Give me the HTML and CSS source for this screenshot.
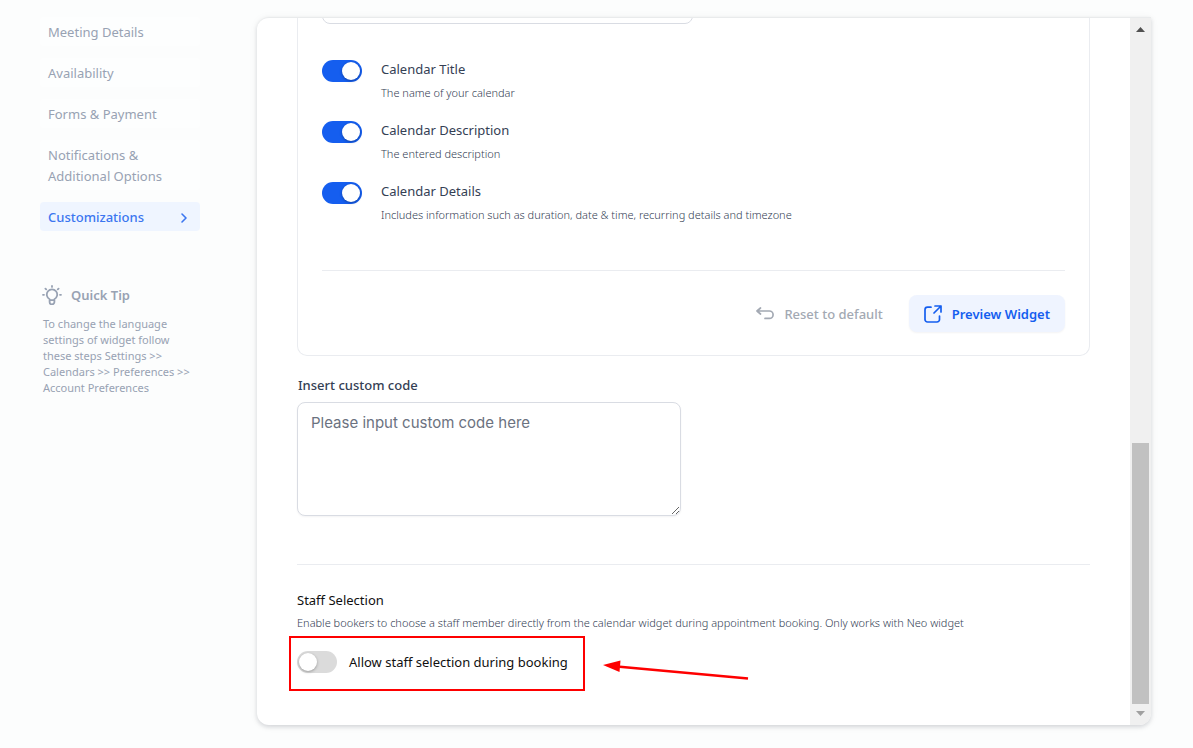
FILE: index.html
```html
<!DOCTYPE html>
<html lang="en">
<head>
<meta charset="utf-8">
<meta name="viewport" content="width=device-width, initial-scale=1">
<title>Calendar customizations</title>
<link rel="stylesheet" href="styles.css">
</head>
<body>
<div class="page">
  <aside class="sidebar">
    <nav class="nav">
      <a class="nav-link" href="#meeting">Meeting Details</a>
      <a class="nav-link" href="#availability">Availability</a>
      <a class="nav-link" href="#forms">Forms &amp; Payment</a>
      <a class="nav-link" href="#notifications">Notifications &amp;<br>Additional Options</a>
      <a class="nav-link nav-link-active" href="#customizations" aria-current="page">Customizations
        <svg width="8" height="12" viewBox="0 0 8 12" fill="none" stroke="currentColor" stroke-width="1.6" stroke-linecap="round" stroke-linejoin="round" aria-hidden="true"><path d="M2 2l4 4-4 4"/></svg>
      </a>
    </nav>
    <section class="tip">
      <h2 class="tip-title">
        <svg width="20" height="20" viewBox="0 0 20 20" fill="none" stroke="currentColor" stroke-width="1.8" stroke-linecap="round" stroke-linejoin="round" aria-hidden="true"><path d="M7.600 15.200v-1A5.200 5.200 0 1 1 12.400 14.200v1M7.600 15.200h4.800v1.800a2.400 2.400 0 0 1-4.800 0zM10 .9v1M1 9.800h1M18 9.800h1M3.400 3.600l.8.8M16.600 3.600l-.8.8"/></svg>
        Quick Tip
      </h2>
      <p class="tip-text">To change the language<br>settings of widget follow<br>these steps Settings &gt;&gt;<br>Calendars &gt;&gt; Preferences &gt;&gt;<br>Account Preferences</p>
    </section>
  </aside>

  <main class="panel">
    <div class="content">
      <section class="card">
        <div class="field-clip"><input class="field" type="text" aria-label="Widget text"></div>
        <div class="options">
          <div class="option">
            <input class="switch" type="checkbox" role="switch" id="title" checked>
            <div class="option-text">
              <label class="option-name" for="title">Calendar Title</label>
              <p class="note">The name of your calendar</p>
            </div>
          </div>
          <div class="option">
            <input class="switch" type="checkbox" role="switch" id="description" checked>
            <div class="option-text">
              <label class="option-name" for="description">Calendar Description</label>
              <p class="note">The entered description</p>
            </div>
          </div>
          <div class="option">
            <input class="switch" type="checkbox" role="switch" id="details" checked>
            <div class="option-text">
              <label class="option-name" for="details">Calendar Details</label>
              <p class="note">Includes information such as duration, date &amp; time, recurring details and timezone</p>
            </div>
          </div>
        </div>
        <div class="actions">
          <button class="button button-plain" type="button">
            <svg width="18" height="14" viewBox="0 0 18 14" fill="none" stroke="currentColor" stroke-width="1.7" stroke-linecap="round" stroke-linejoin="round" aria-hidden="true"><path d="M4.500 1L1 4l3.500 3M1.200 4h12.200a3.700 3.700 0 0 1 0 7.400H9"/></svg>
            Reset to default
          </button>
          <button class="button button-soft" type="button">
            <svg width="18" height="18" viewBox="0 0 18 18" fill="none" stroke="currentColor" stroke-width="1.700" stroke-linecap="round" stroke-linejoin="round" aria-hidden="true"><path d="M7 2.200H3.500A2.500 2.500 0 0 0 1 4.700V14.500a2.500 2.500 0 0 0 2.500 2.500h9.500a2.500 2.500 0 0 0 2.500-2.500V11M11 1h6v6M17 1l-7 7"/></svg>
            Preview Widget
          </button>
        </div>
      </section>

      <section class="code">
        <label class="code-label" for="code">Insert custom code</label>
        <textarea class="code-input" id="code" placeholder="Please input custom code here"></textarea>
      </section>

      <section class="staff">
        <h2 class="staff-title">Staff Selection</h2>
        <p class="note">Enable bookers to choose a staff member directly from the calendar widget during appointment booking. Only works with Neo widget</p>
        <div class="staff-row">
          <input class="switch" type="checkbox" role="switch" id="staff">
          <label class="staff-label" for="staff">Allow staff selection during booking</label>
          <svg class="arrow" width="148" height="22" viewBox="0 0 148 22" aria-hidden="true"><path d="M14 6.500L145 18.500" stroke="#fe0000" stroke-width="2.600"/><path d="M0 5L17.500.500l-1 11.500z" fill="#fe0000"/></svg>
        </div>
      </section>
    </div>
    <div class="scrollbar" aria-hidden="true">
      <svg width="9" height="5" viewBox="0 0 9 5"><path d="M4.500 0L9 5H0z" fill="#505050"/></svg>
      <div class="scroll-track"><div class="scroll-thumb"></div></div>
      <svg width="9" height="5" viewBox="0 0 9 5"><path d="M0 0h9L4.500 5z" fill="#a0a0a0"/></svg>
    </div>
  </main>
</div>
</body>
</html>
```
FILE: styles.css
```css
* { box-sizing: border-box; }

body {
  margin: 0;
  background: #fcfdfd;
  color: #344054;
  font: 13px/20px "Noto Sans", "Open Sans", sans-serif;
}

h2, p { margin: 0; }

.page {
  display: flex;
  align-items: stretch;
  gap: 57px;
  padding: 17px 42px 22px 40px;
}

.sidebar { flex: 0 0 160px; }

.nav {
  display: flex;
  flex-direction: column;
  gap: 12px;
}

.nav-link {
  display: flex;
  align-items: center;
  justify-content: space-between;
  padding: 5px 12px 3px 8px;
  border-radius: 4px;
  background: #fdfefe;
  color: #98a2b3;
  font-weight: 400;
  line-height: 21px;
  text-decoration: none;
}

.nav-link-active {
  background: #eff5ff;
  color: #3b76f0;
  font-weight: 500;
}

.tip {
  margin-top: 54px;
  padding-left: 3px;
  color: #98a2b3;
}

.tip-title {
  display: flex;
  align-items: center;
  gap: 9px;
  margin-left: -1px;
  font-size: 13px;
  font-weight: 600;
}

.tip-text {
  margin-top: 11px;
  font-size: 11px;
  line-height: 16px;
  white-space: nowrap;
}

.panel {
  display: flex;
  flex: 1;
  min-width: 0;
  overflow: hidden;
  border-top: 1px solid #e9ebec;
  border-radius: 12px 0 12px 12px;
  background: #fff;
  box-shadow: 0 2px 4px rgba(16, 24, 40, .14), 0 1px 10px rgba(16, 24, 40, .05);
}

.content {
  flex: 1;
  min-width: 0;
  padding: 0 40px 34px;
}

.card {
  padding: 0 24px 23px;
  border: 1px solid #eaecf0;
  border-top: 0;
  border-radius: 0 0 10px 10px;
}

.field-clip {
  display: flex;
  align-items: flex-end;
  height: 6px;
  overflow: hidden;
}

.field {
  flex: none;
  width: 371px;
  max-width: 100%;
  height: 36px;
  border: 1px solid #d9dce3;
  border-radius: 8px;
  background: #fff;
}

.options {
  display: flex;
  flex-direction: column;
  gap: 17px;
  padding: 35px 0 45px;
  border-bottom: 1px solid #eaecf0;
}

.option {
  display: flex;
  gap: 19px;
}

.option-text {
  display: flex;
  flex-direction: column;
  gap: 4px;
}

.option .switch { margin-top: 1px; }

.note {
  color: #344054;
  font-size: 11px;
  font-weight: 300;
}

.switch {
  flex: none;
  appearance: none;
  width: 40px;
  height: 22px;
  margin: 0;
  padding: 2px;
  border-radius: 11px;
  background: #dbdbdb;
}

.switch::before {
  display: block;
  width: 18px;
  height: 18px;
  border-radius: 50%;
  background: #fff;
  box-shadow: 0 1px 3px rgba(0, 0, 0, .3);
  content: "";
}

.switch:checked { background: #155eef; }
.switch:checked::before { margin-left: auto; }

.actions {
  display: flex;
  justify-content: flex-end;
  gap: 24px;
  padding-top: 24px;
}

.button {
  display: flex;
  align-items: center;
  gap: 10px;
  height: 37px;
  border: 0;
  border-radius: 8px;
  background: transparent;
  font: inherit;
}

.button-plain {
  padding: 0 2px 0 0;
  color: #a3a9b3;
  font-weight: 500;
}

.button-soft {
  padding: 0 15px;
  background: #eff4ff;
  box-shadow: 0 1px 2px rgba(16, 24, 40, .05);
  color: #155eef;
  font-weight: 600;
}

.code {
  display: flex;
  flex-direction: column;
  gap: 7px;
  padding: 19px 0 48px;
  border-bottom: 1px solid #eaecf0;
}

.code-label {
  padding-left: 1px;
  font-weight: 500;
}

.code-input {
  width: 384px;
  max-width: 100%;
  height: 114px;
  padding: 8px 13px;
  border: 1px solid #d9dce3;
  border-radius: 8px;
  background: #fff;
  box-shadow: 0 1px 2px rgba(16, 24, 40, .05);
  color: #344054;
  font: 15px/24px Inter, sans-serif;
}

.code-input::placeholder { color: #6b7280; }

.staff { padding-top: 25px; }

.staff-title {
  margin-bottom: 3px;
  color: #101010;
  font-size: 13px;
  font-weight: 400;
}

.staff-row {
  position: relative;
  display: flex;
  align-items: flex-start;
  gap: 12px;
  width: 296px;
  height: 55px;
  margin: 3px 0 0 -8px;
  padding: 13px 6px;
  border: 2px solid #fe0000;
}

.staff-label {
  color: #101010;
  line-height: 22px;
  white-space: nowrap;
}

.arrow {
  position: absolute;
  top: 22px;
  left: 312px;
}

.scrollbar {
  display: flex;
  flex: 0 0 21px;
  flex-direction: column;
  align-items: center;
  gap: 7px;
  padding: 9px 2px;
  background: #f0f0f0;
}

.scrollbar svg { flex: none; }

.scroll-track {
  display: flex;
  flex: 1;
  flex-direction: column;
  justify-content: flex-end;
  width: 17px;
}

.scroll-thumb {
  height: 39.3%;
  background: #c1c1c1;
}
```
